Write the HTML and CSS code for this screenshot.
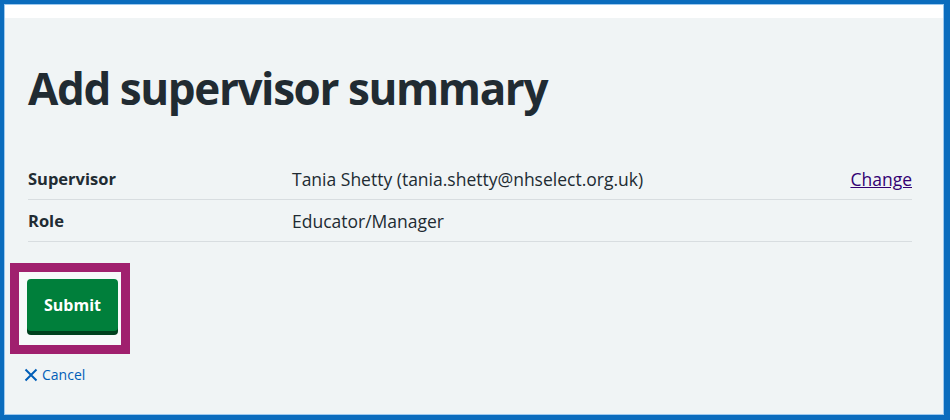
FILE: index.html
```html
<!DOCTYPE html>
<html lang="en">
<head>
<meta charset="utf-8">
<title>Add supervisor summary</title>
<link rel="stylesheet" href="styles.css">
</head>
<body>
<div class="frame">
  <div class="inner">
    <div class="topstrip"></div>
    <main class="content">
      <h1 class="heading">Add supervisor summary</h1>
      <dl class="summary">
        <div class="row">
          <dt class="key">Supervisor</dt>
          <dd class="value">Tania Shetty (tania.shetty@nhselect.org.uk)</dd>
          <dd class="action"><a href="#" class="change">Change</a></dd>
        </div>
        <div class="row">
          <dt class="key">Role</dt>
          <dd class="value">Educator/Manager</dd>
          <dd class="action"></dd>
        </div>
      </dl>
      <div class="highlight">
        <button class="submit" type="button">Submit</button>
      </div>
      <a href="#" class="cancel">
        <svg class="cancel-icon" viewBox="0 0 14 14" width="14" height="14" aria-hidden="true"><path d="M1.5 1.5 L12.5 12.5 M12.5 1.5 L1.5 12.5" stroke="#005eb8" stroke-width="2" fill="none"/></svg>
        <span>Cancel</span>
      </a>
    </main>
  </div>
</div>
</body>
</html>
```

FILE: styles.css
```css
* { box-sizing: border-box; }
html, body { margin: 0; padding: 0; }
body {
  width: 950px;
  height: 420px;
  font-family: "Open Sans", "Noto Sans", Arial, sans-serif;
  color: #212b32;
  background: #ffffff;
}
.frame {
  width: 950px;
  height: 420px;
  border-style: solid;
  border-color: #0b6cbd;
  border-width: 4px 6px 5px 4px;
}
.inner {
  height: 100%;
  border: 1px solid #9cc8ee;
  background: #f0f4f5;
  display: flex;
  flex-direction: column;
}
.topstrip {
  height: 13px;
  background: #ffffff;
  flex: none;
}
.content {
  padding: 0 31px 0 23px;
}
.heading {
  margin: 40px 0 0 0;
  font-size: 44px;
  line-height: 60px;
  font-weight: 700;
  letter-spacing: -1.4px;
  color: #212b32;
}
.summary {
  margin: 40px 0 0 0;
}
.row {
  display: flex;
  align-items: center;
  height: 42px;
  border-bottom: 1px solid #d8dde0;
  font-size: 17.5px;
}
.key {
  width: 264px;
  font-weight: 700;
  font-size: 16.5px;
  margin: 0;
}
.value {
  flex: 1;
  margin: 0;
}
.action {
  margin: 0;
  text-align: right;
}
.change {
  color: #330072;
  text-decoration: underline;
  font-size: 17.5px;
}
.highlight {
  margin: 21px 0 0 -18px;
  width: 120px;
  height: 91px;
  border: 9px solid #a0206e;
  background: #f7f9fa;
  padding: 7px 0 0 8px;
}
.submit {
  display: block;
  width: 91px;
  height: 52px;
  border: 0;
  border-radius: 4px;
  background: #007f3b;
  box-shadow: 0 4px 0 #00401e;
  color: #ffffff;
  font-family: "Open Sans", "Noto Sans", Arial, sans-serif;
  font-weight: 700;
  font-size: 16px;
  padding: 0;
}
.cancel {
  display: inline-flex;
  align-items: center;
  gap: 4px;
  margin: 11px 0 0 -4px;
  color: #005eb8;
  text-decoration: none;
  font-size: 14px;
}
.cancel-icon { display: block; }
```
